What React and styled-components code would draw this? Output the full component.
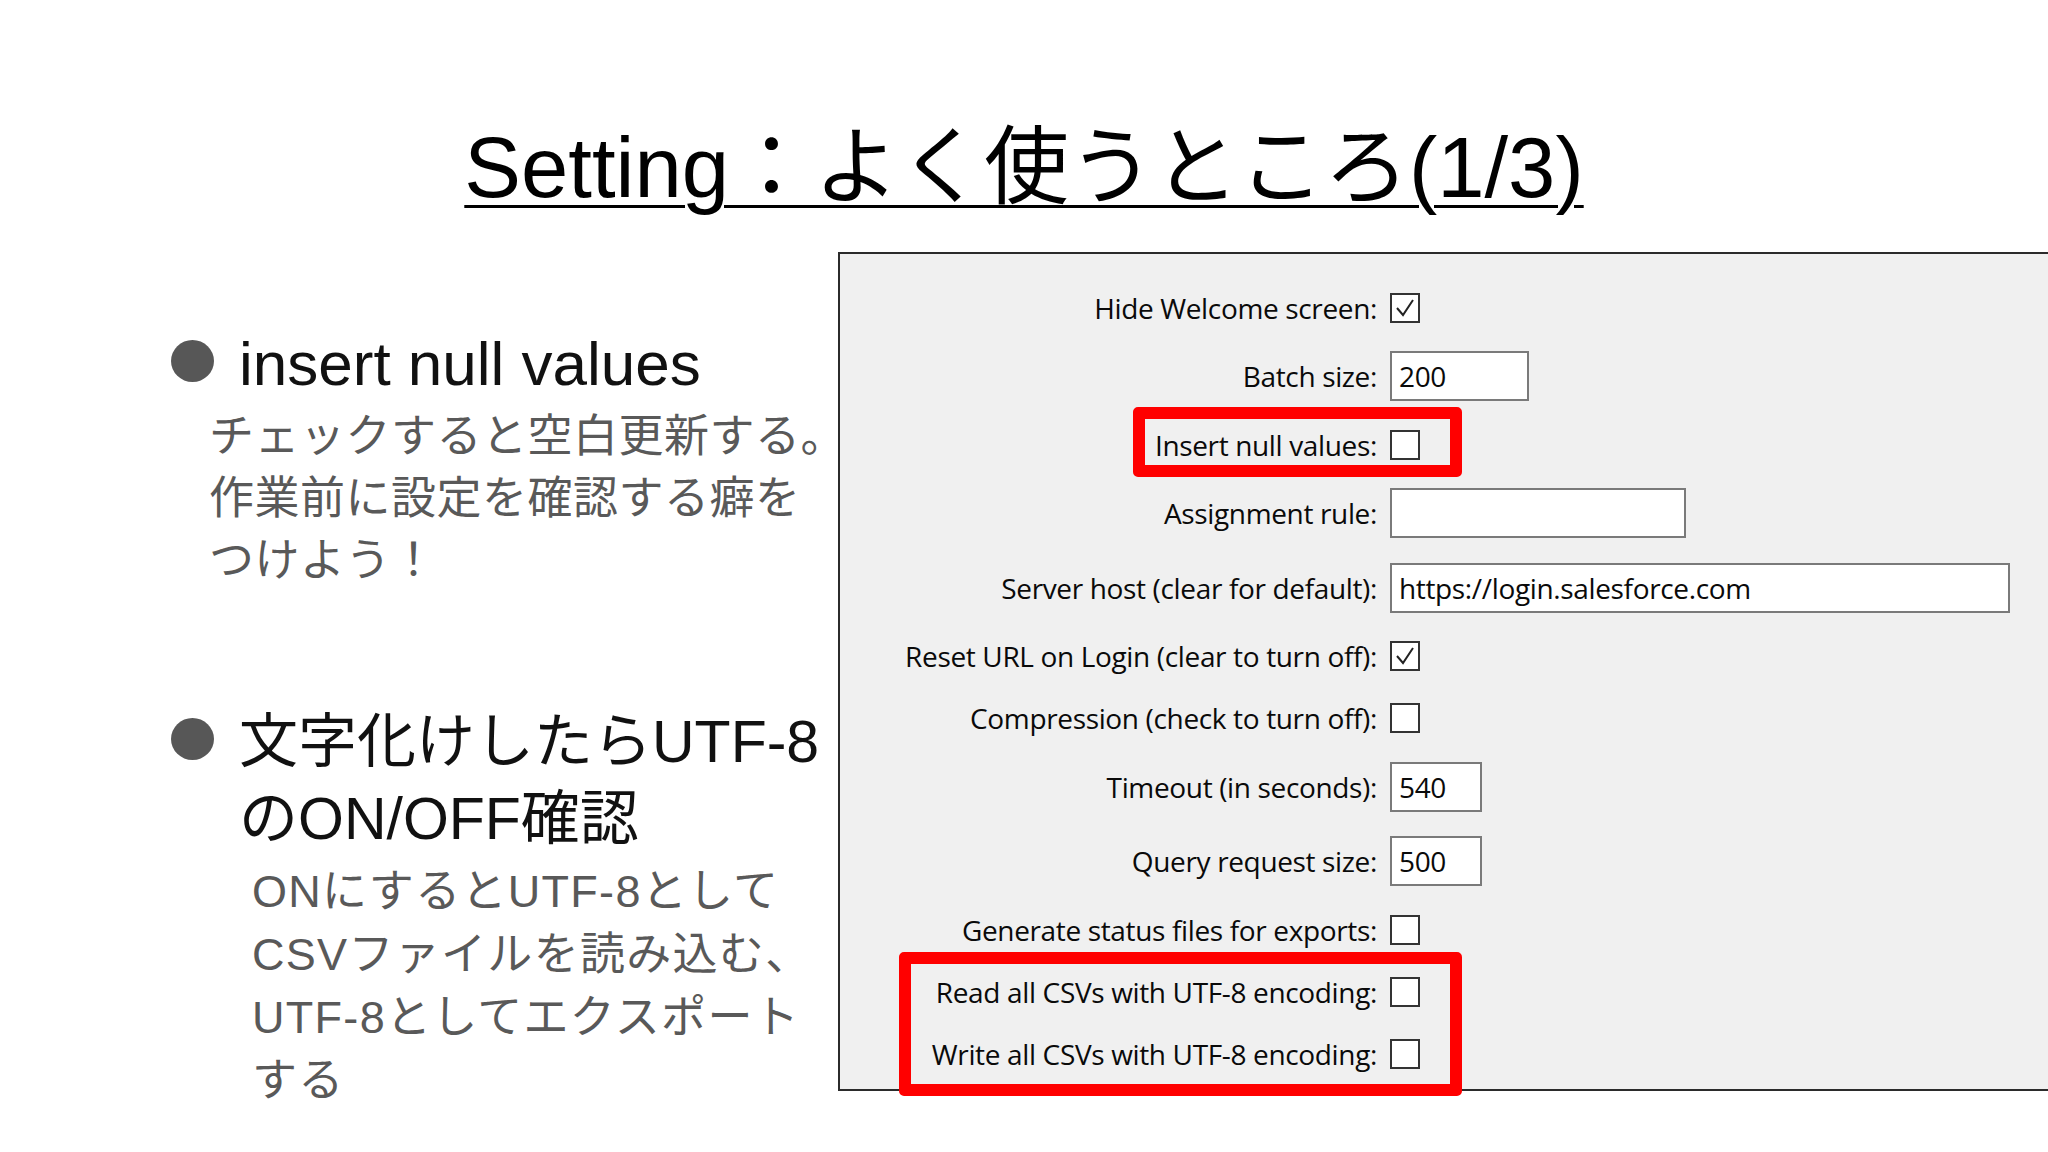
import React from "react";
import styled, { createGlobalStyle } from "styled-components";

const GlobalStyle = createGlobalStyle`
  html, body {
    margin: 0;
    padding: 0;
    background: #ffffff;
  }
  body {
    width: 2048px;
    height: 1152px;
    overflow: hidden;
    font-family: "Liberation Sans", "Noto Sans CJK JP", sans-serif;
  }
`;

const Slide = styled.div`
  width: 2048px;
  height: 1152px;
  display: flex;
  flex-direction: column;
  background: #fff;
  overflow: hidden;
`;

const Title = styled.h1`
  margin: 118px 0 0;
  align-self: center;
  font-family: "Liberation Sans", "Noto Sans CJK JP", sans-serif;
  font-weight: 400;
  font-size: 85px;
  line-height: 100px;
  color: #000;
  text-decoration: underline;
  text-decoration-thickness: 3px;
  text-underline-offset: 8px;
`;

const Body = styled.div`
  display: flex;
  margin-top: 34px;
`;

const Left = styled.div`
  width: 838px;
  padding: 80px 0 0 171px;
  box-sizing: border-box;
  display: flex;
  flex-direction: column;
  font-family: "Liberation Sans", "Noto Sans CJK JP", sans-serif;
`;

const Point = styled.div`
  display: flex;
  align-items: flex-start;
  gap: 25px;
  margin-top: ${(p) => p.$top || 0}px;
`;

const Dot = styled.span`
  flex: none;
  width: 43px;
  height: 42px;
  border-radius: 50%;
  background: #575757;
  margin-top: ${(p) => p.$offset}px;
`;

const Heading = styled.div`
  font-size: ${(p) => p.$size}px;
  line-height: ${(p) => p.$line}px;
  color: #111;
  white-space: nowrap;
`;

const Note = styled.div`
  margin-left: ${(p) => p.$indent}px;
  margin-top: ${(p) => p.$top}px;
  font-size: 45px;
  line-height: ${(p) => p.$line}px;
  letter-spacing: ${(p) => p.$spacing}px;
  color: #595959;
  white-space: nowrap;
`;

const Panel = styled.div`
  position: relative;
  flex: 1;
  height: 839px;
  box-sizing: border-box;
  background: #f0f0f0;
  border: 2px solid #2b2b2b;
  border-right: none;
  padding-top: 33px;
  font-family: "Open Sans", "Noto Sans", sans-serif;
  font-size: 28px;
  color: #0a0a0a;
`;

const Row = styled.div`
  display: grid;
  grid-template-columns: 537px auto;
  column-gap: 13px;
  align-items: center;
  height: ${(p) => (p.$input ? 54 : 42)}px;
  margin-bottom: 20.4px;
`;

const Label = styled.span`
  justify-self: end;
  white-space: nowrap;
  letter-spacing: -0.35px;
`;

const Box = styled.span`
  width: 30px;
  height: 30px;
  box-sizing: border-box;
  border: 2px solid #333;
  background: #fff;
  display: flex;
  align-items: center;
  justify-content: center;
`;

const Field = styled.span`
  width: ${(p) => p.$w}px;
  height: 50px;
  box-sizing: border-box;
  border: 2px solid #7a7a7a;
  background: #fff;
  padding-left: 7px;
  display: flex;
  align-items: center;
  white-space: nowrap;
  letter-spacing: -0.35px;
`;

const Highlight = styled.div`
  position: absolute;
  left: ${(p) => p.$x}px;
  top: ${(p) => p.$y}px;
  width: ${(p) => p.$w}px;
  height: ${(p) => p.$h}px;
  box-sizing: border-box;
  border: 12px solid #ff0000;
  border-radius: 5px;
  pointer-events: none;
`;

const Check = () => (
  <svg width="22" height="22" viewBox="0 0 22 22">
    <path d="M3 11 L9 18 L19 3" fill="none" stroke="#222" strokeWidth="2" />
  </svg>
);

const rows = [
  { label: "Hide Welcome screen:", check: true },
  { label: "Batch size:", value: "200", w: 139 },
  { label: "Insert null values:", check: false },
  { label: "Assignment rule:", value: "", w: 296 },
  { label: "Server host (clear for default):", value: "https://login.salesforce.com", w: 620 },
  { label: "Reset URL on Login (clear to turn off):", check: true },
  { label: "Compression (check to turn off):", check: false },
  { label: "Timeout (in seconds):", value: "540", w: 92 },
  { label: "Query request size:", value: "500", w: 92 },
  { label: "Generate status files for exports:", check: false },
  { label: "Read all CSVs with UTF-8 encoding:", check: false },
  { label: "Write all CSVs with UTF-8 encoding:", check: false },
];

export default function App() {
  return (
    <Slide>
      <GlobalStyle />
      <Title>Setting：よく使うところ(1/3)</Title>
      <Body>
        <Left>
          <Point>
            <Dot $offset={8} />
            <Heading $size={62} $line={64}>insert null values</Heading>
          </Point>
          <Note $indent={38} $top={10} $line={62} $spacing={0.5}>
            チェックすると空白更新する。
            <br />
            作業前に設定を確認する癖を
            <br />
            つけよう！
          </Note>
          <Point $top={112}>
            <Dot $offset={14} />
            <Heading $size={59} $line={77}>
              文字化けしたらUTF-8
              <br />
              のON/OFF確認
            </Heading>
          </Point>
          <Note $indent={81} $top={2} $line={63} $spacing={1.3}>
            ONにするとUTF-8として
            <br />
            CSVファイルを読み込む、
            <br />
            UTF-8としてエクスポート
            <br />
            する
          </Note>
        </Left>
        <Panel>
          {rows.map((r) => (
            <Row key={r.label} $input={r.value !== undefined}>
              <Label>{r.label}</Label>
              {r.value !== undefined ? (
                <Field $w={r.w}>{r.value}</Field>
              ) : (
                <Box>{r.check && <Check />}</Box>
              )}
            </Row>
          ))}
          <Highlight $x={293} $y={153} $w={329} $h={70} />
          <Highlight $x={59} $y={698} $w={563} $h={144} />
        </Panel>
      </Body>
    </Slide>
  );
}
